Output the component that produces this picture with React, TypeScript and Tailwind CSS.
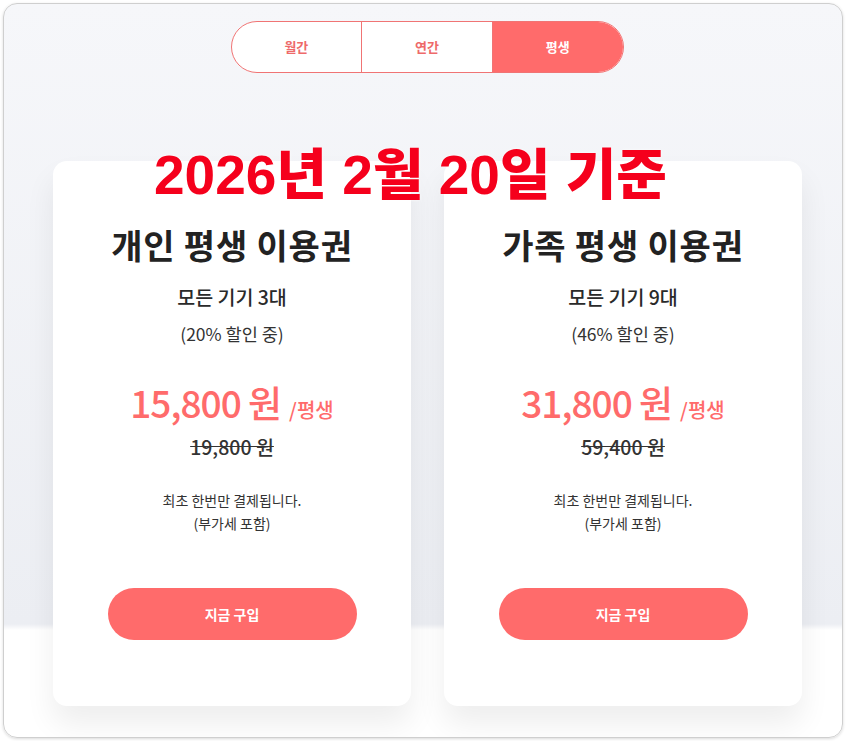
import React from "react";

const plans = [
  { name: "개인 평생 이용권", devices: "모든 기기 3대", sale: "(20% 할인 중)", price: "15,800 원", old: "19,800 원" },
  { name: "가족 평생 이용권", devices: "모든 기기 9대", sale: "(46% 할인 중)", price: "31,800 원", old: "59,400 원" },
];

const tabs = ["월간", "연간", "평생"];

const App = () => {
  return (
    <div className="w-[846px] h-[741px] bg-white p-[3px] font-['Noto_Sans_CJK_KR','Noto_Sans',sans-serif]">
      <div className="relative w-[840px] h-[735px] rounded-[14px] border border-[#cfcfcf] shadow-[0_1px_3px_rgba(0,0,0,0.15)] overflow-hidden bg-[linear-gradient(to_bottom,#f6f7fa_0px,#eceef3_620px,#ffffff_626px)] flex flex-col items-center">
        <div className="mt-[17px] ml-[8px] flex w-[393px] h-[52px] rounded-full border border-[#f07474] overflow-hidden bg-white">
          {tabs.map((t, i) => (
            <div
              key={t}
              className={
                i === 2
                  ? "flex-1 flex items-center justify-center bg-[#ff6b6b] text-white text-[13px] font-bold"
                  : "flex-1 flex items-center justify-center text-[#ee6a6a] text-[13px] font-bold border-r border-[#f07474]"
              }
            >
              {t}
            </div>
          ))}
        </div>

        <div className="mt-[88px] ml-[9px] flex gap-[33px]">
          {plans.map((p) => (
            <div
              key={p.name}
              className="w-[358px] h-[545px] bg-white rounded-[14px] shadow-[0_18px_30px_rgba(0,0,0,0.07)] flex flex-col items-center text-[#222]"
            >
              <div className="mt-[62px] text-[34px] font-semibold leading-[44px] tracking-[0.8px]">{p.name}</div>
              <div className="mt-[17px] text-[19.5px] font-medium leading-[26px] text-[#2a2a2a]">{p.devices}</div>
              <div className="mt-[12px] text-[17.5px] leading-[24px] text-[#333]">{p.sale}</div>
              <div className="mt-[32px] flex items-baseline text-[#ff6b6b]">
                <span className="text-[37px] font-medium leading-[48px] tracking-[-1px]">{p.price}</span>
                <span className="ml-[8px] text-[20px] font-medium">/평생</span>
              </div>
              <div className="mt-[8px] text-[19.5px] font-medium leading-[26px] text-[#333] line-through decoration-[#333]">{p.old}</div>
              <div className="mt-[29px] text-[14px] leading-[23px] text-[#333] text-center">
                최초 한번만 결제됩니다.
                <br />
                (부가세 포함)
              </div>
              <button className="mt-[53px] w-[249px] h-[52px] rounded-full bg-[#ff6b6b] text-white text-[14px] font-semibold">
                지금 구입
              </button>
            </div>
          ))}
        </div>

        <div className="absolute left-[150px] top-[139px] text-[#f5001c] text-[55px] font-extrabold leading-[64px] font-['Liberation_Sans','Noto_Sans_CJK_KR',sans-serif] [text-shadow:0_0_3px_rgba(255,255,255,0.9)] whitespace-nowrap">
          2026년 2월 20일 기준
        </div>
      </div>
    </div>
  );
};

export default App;
